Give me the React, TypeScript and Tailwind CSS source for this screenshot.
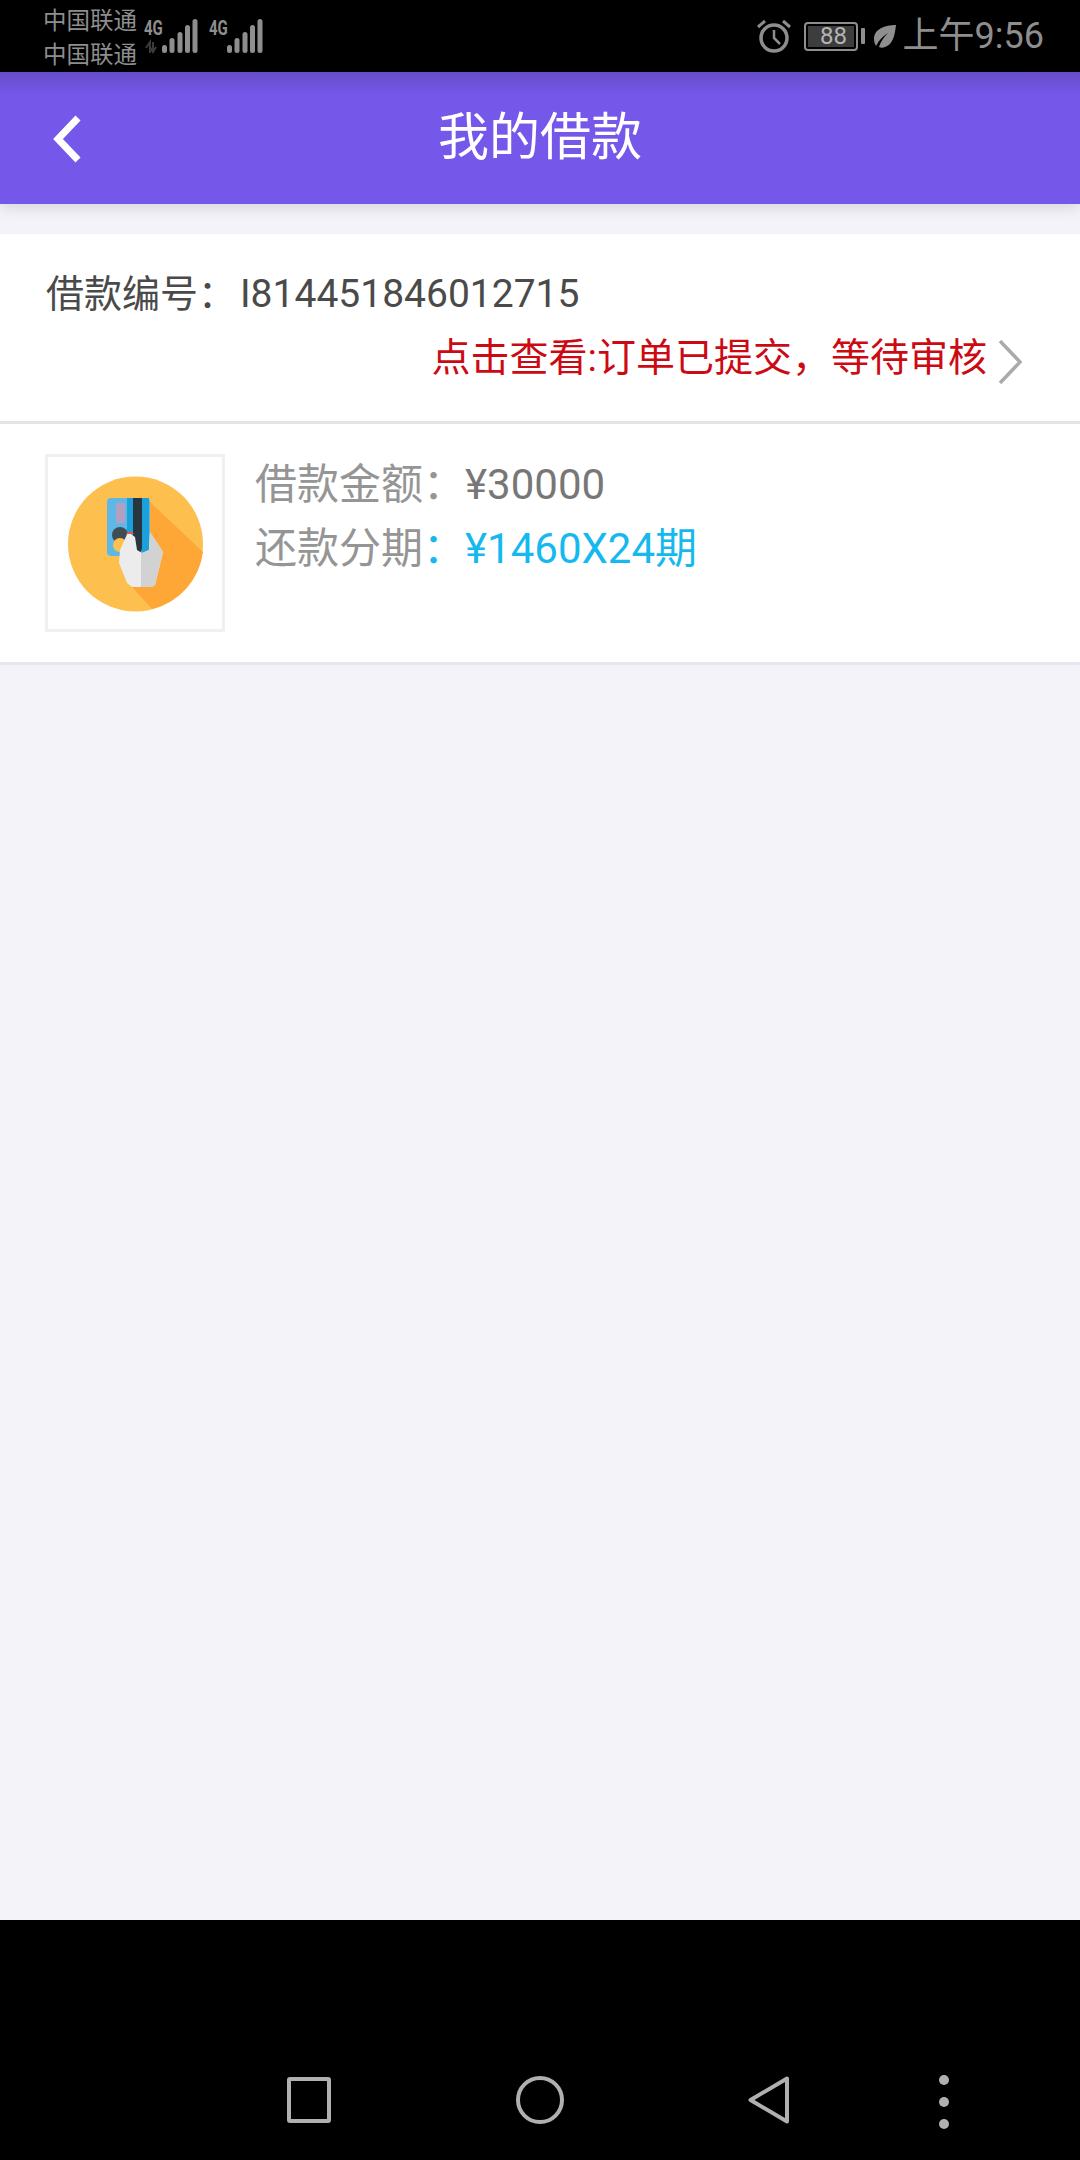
import React from 'react';

const cjk = { fontFamily: 'Roboto, "Noto Sans CJK SC", sans-serif' };

function Signal({ arrows }: { arrows?: boolean }) {
  return (
    <div className="relative w-[54px] h-[36px]">
      <span className="absolute left-0 top-0 text-[20px] font-bold leading-none text-[#8e8e8e] scale-x-75 origin-left" style={{ fontFamily: 'Roboto, sans-serif' }}>
        4G
      </span>
      <svg width="54" height="36" viewBox="0 0 54 36" className="block">
        {arrows && <path d="M2 30l4-6v11M9 24v10M12 29l-3 5-3-5" stroke="#3a3a3a" strokeWidth="2" fill="none" />}
        <rect x="18" y="27" width="5" height="8" rx="2.5" fill="#8e8e8e" />
        <rect x="25.5" y="20" width="5" height="15" rx="2.5" fill="#8e8e8e" />
        <rect x="33.5" y="14" width="5" height="21" rx="2.5" fill="#8e8e8e" />
        <rect x="41" y="7" width="5" height="28" rx="2.5" fill="#8e8e8e" />
        <rect x="48.5" y="1" width="5" height="34" rx="2.5" fill="#8e8e8e" />
      </svg>
    </div>
  );
}

function StatusBar() {
  return (
    <div className="h-[72px] bg-black flex items-center justify-between pl-[43px] pr-[36px]" style={cjk}>
      <div className="flex items-center">
        <div className="text-[23.5px] leading-[34px] text-[#8e8e8e] w-[101px] mt-[3px]">
          <div>中国联通</div>
          <div>中国联通</div>
        </div>
        <Signal arrows />
        <div className="ml-[11px]"><Signal /></div>
      </div>
      <div className="flex items-center">
        <svg width="36" height="36" viewBox="0 0 36 36" className="block">
          <circle cx="18" cy="20" r="13" fill="none" stroke="#8e8e8e" strokeWidth="3.5" />
          <path d="M18 12v8l6 6" fill="none" stroke="#8e8e8e" strokeWidth="2.5" />
          <path d="M2 9l7-6M34 9l-7-6" stroke="#8e8e8e" strokeWidth="3" />
        </svg>
        <div className="ml-[12px] w-[54px] h-[29px] rounded-[4px] border-2 border-[#8e8e8e] p-[2px] flex">
          <div className="w-full h-full bg-[#3d3d3d] text-[#b5b5b5] text-[24px] leading-[21px] text-center pl-[6px]">88</div>
        </div>
        <div className="ml-[3px] w-[4px] h-[16px] rounded-[1px] bg-[#8e8e8e]"></div>
        <svg width="24" height="24" viewBox="0 0 24 24" className="block ml-[8px]">
          <path d="M23 1C12 1 1 5 1 15c0 3 1 5 2 7 3-6 7-10 12-13-4 4-7 8-9 14 2 1 4 1 6 0C20 21 22 10 23 1z" fill="#8e8e8e" />
        </svg>
        <span className="ml-[6px] text-[36px] leading-none text-[#8e8e8e]">上午9:56</span>
      </div>
    </div>
  );
}

function Header() {
  return (
    <div className="relative h-[132px] bg-gradient-to-b from-[#674dc9] to-[#7558ea] to-[18%] flex items-center shadow-[0_4px_14px_rgba(0,0,0,0.12)]">
      <svg width="30" height="48" viewBox="0 0 30 48" className="block absolute left-[52px] top-[43px]">
        <path d="M26 3L6 24l20 21" fill="none" stroke="#fff" strokeWidth="7" />
      </svg>
      <div className="w-full text-center text-[51px] leading-none text-white mt-[-2px]" style={cjk}>我的借款</div>
    </div>
  );
}

function CardIcon() {
  return (
    <svg width="174" height="172" viewBox="0 0 174 172" className="block">
      <circle cx="87.5" cy="87" r="67.5" fill="#fdc04f" />
      <path d="M102 45L155 95A68 68 0 0 1 104 152L84 130z" fill="#fea736" />
      <rect x="59" y="41" width="43" height="58" rx="4" fill="#5fb7e5" />
      <rect x="79" y="41" width="6" height="58" fill="#1ba0dc" />
      <rect x="94" y="41" width="7" height="55" fill="#1ba0dc" />
      <path d="M85 41h9v50c0 3-2 5-4 5s-5-2-5-5z" fill="#28373f" />
      <path d="M68 46h9v20h-9z" fill="#b3a0c0" />
      <circle cx="72" cy="78" r="8" fill="#3f4d55" />
      <circle cx="72" cy="88" r="7" fill="#fdc04f" />
      <path d="M80 75l7 5 2 13 5 3 7-3 1-18 13 20-8 33-3 2H84l-5-4-8-20 1-13z" fill="#ececec" />
      <path d="M93 96l1 0 7-3 1-18 13 20-8 33-3 2H93z" fill="#d2d2d2" />
      <path d="M78 77c2-3 6-3 8 0z" fill="#e2574c" />
    </svg>
  );
}

function NavBar() {
  return (
    <div className="h-[240px] bg-black flex items-start pt-[156px] pl-[287px]">
      <div className="w-[44px] h-[46px] mt-[1px] rounded-[3px] border-[4px] border-[#b0b0b0]"></div>
      <div className="w-[48px] h-[48px] ml-[185px] rounded-full border-[4px] border-[#b0b0b0]"></div>
      <svg width="42" height="48" viewBox="0 0 42 48" className="block ml-[184px]">
        <path d="M39 2.5v43L2.5 24z" fill="none" stroke="#b0b0b0" strokeWidth="4" strokeLinejoin="round" />
      </svg>
      <div className="ml-[149px] mt-[-1px] flex flex-col gap-[12px]">
        <div className="w-[10px] h-[10px] rounded-full bg-[#b0b0b0]"></div>
        <div className="w-[10px] h-[10px] rounded-full bg-[#b0b0b0]"></div>
        <div className="w-[10px] h-[10px] rounded-full bg-[#b0b0b0]"></div>
      </div>
    </div>
  );
}

export default function App() {
  return (
    <div className="w-[1080px] h-[2160px] flex flex-col bg-[#f3f3f9] overflow-hidden" style={cjk}>
      <StatusBar />
      <Header />
      <div className="flex-1 pt-[30px]">
        <div className="h-[190px] bg-white border-b-[3px] border-[#e4e4e6] pl-[46px] pr-[57px] pt-[35px]">
          <div className="text-[38px] leading-[50px] text-[#4a4a4a]">借款编号：<span className="text-[39px] ml-[4px]">I814451846012715</span></div>
          <div className="flex items-center justify-end mt-[14px] h-[50px]">
            <span className="text-[39px] leading-[50px] text-[#cc0a14]">点击查看:订单已提交，等待审核</span>
            <svg width="25" height="44" viewBox="0 0 25 44" className="block ml-[11px] mt-[7px]">
              <path d="M2 1l20 21L2 43" fill="none" stroke="#aaaaaa" strokeWidth="3.5" />
            </svg>
          </div>
        </div>
        <div className="h-[241px] bg-white border-b-[3px] border-[#e6e6ee] pl-[45px] pt-[30px] flex items-start">
          <div className="w-[180px] h-[178px] border-[3px] border-[#f0f0f2] shrink-0">
            <CardIcon />
          </div>
          <div className="ml-[30px] mt-[-1px]">
            <div className="text-[42px] leading-[64px] text-[#959595]">借款金额：<span className="text-[#777]">¥30000</span></div>
            <div className="text-[42px] leading-[64px] text-[#959595]">还款分期<span className="text-[#16b9ee]">：¥1460X24期</span></div>
          </div>
        </div>
      </div>
      <NavBar />
    </div>
  );
}
